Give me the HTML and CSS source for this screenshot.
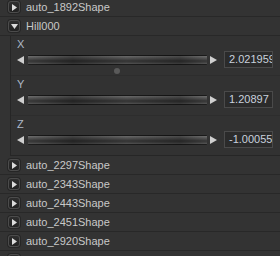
FILE: index.html
```html
<!DOCTYPE html>
<html>
<head>
<meta charset="utf-8">
<link rel="stylesheet" href="styles.css">
</head>
<body>
<div class="list">
  <div class="row"><span class="btn"><svg width="5" height="7" viewBox="0 0 5 7"><path d="M0 0 L5 3.5 L0 7 Z" fill="#dcdcdc"/></svg></span><span class="name">auto_1892Shape</span></div>
  <div class="row"><span class="btn"><svg width="7" height="5" viewBox="0 0 7 5"><path d="M0 0 L7 0 L3.5 5 Z" fill="#dcdcdc"/></svg></span><span class="name">Hill000</span></div>
  <div class="panel">
    <div class="attr">
      <div class="label">X</div>
      <div class="ctl">
        <svg class="arr" width="7" height="8" viewBox="0 0 7 8"><path d="M7 0 L0 4 L7 8 Z" fill="#cfcfcf"/></svg>
        <div class="slider"></div>
        <svg class="arr r" width="7" height="8" viewBox="0 0 7 8"><path d="M0 0 L7 4 L0 8 Z" fill="#cfcfcf"/></svg>
        <div class="field">2.021959</div>
      </div>
      <div class="dotrow"><span class="dot"></span></div>
    </div>
    <div class="attr">
      <div class="label">Y</div>
      <div class="ctl">
        <svg class="arr" width="7" height="8" viewBox="0 0 7 8"><path d="M7 0 L0 4 L7 8 Z" fill="#cfcfcf"/></svg>
        <div class="slider"></div>
        <svg class="arr r" width="7" height="8" viewBox="0 0 7 8"><path d="M0 0 L7 4 L0 8 Z" fill="#cfcfcf"/></svg>
        <div class="field">1.20897</div>
      </div>
    </div>
    <div class="attr">
      <div class="label">Z</div>
      <div class="ctl">
        <svg class="arr" width="7" height="8" viewBox="0 0 7 8"><path d="M7 0 L0 4 L7 8 Z" fill="#cfcfcf"/></svg>
        <div class="slider"></div>
        <svg class="arr r" width="7" height="8" viewBox="0 0 7 8"><path d="M0 0 L7 4 L0 8 Z" fill="#cfcfcf"/></svg>
        <div class="field">-1.00055</div>
      </div>
    </div>
  </div>
  <div class="row"><span class="btn"><svg width="5" height="7" viewBox="0 0 5 7"><path d="M0 0 L5 3.5 L0 7 Z" fill="#dcdcdc"/></svg></span><span class="name">auto_2297Shape</span></div>
  <div class="row"><span class="btn"><svg width="5" height="7" viewBox="0 0 5 7"><path d="M0 0 L5 3.5 L0 7 Z" fill="#dcdcdc"/></svg></span><span class="name">auto_2343Shape</span></div>
  <div class="row"><span class="btn"><svg width="5" height="7" viewBox="0 0 5 7"><path d="M0 0 L5 3.5 L0 7 Z" fill="#dcdcdc"/></svg></span><span class="name">auto_2443Shape</span></div>
  <div class="row"><span class="btn"><svg width="5" height="7" viewBox="0 0 5 7"><path d="M0 0 L5 3.5 L0 7 Z" fill="#dcdcdc"/></svg></span><span class="name">auto_2451Shape</span></div>
  <div class="row"><span class="btn"><svg width="5" height="7" viewBox="0 0 5 7"><path d="M0 0 L5 3.5 L0 7 Z" fill="#dcdcdc"/></svg></span><span class="name">auto_2920Shape</span></div>
  <div class="row"><span class="btn"><svg width="5" height="7" viewBox="0 0 5 7"><path d="M0 0 L5 3.5 L0 7 Z" fill="#dcdcdc"/></svg></span><span class="name">auto_3012Shape</span></div>
</div>
</body>
</html>
```
FILE: styles.css
```css
html, body {
  margin: 0;
  padding: 0;
  background: #333333;
  width: 280px;
  height: 256px;
  overflow: hidden;
}
body {
  font-family: "Liberation Sans", Arial, sans-serif;
  font-size: 11px;
  color: #c8c8c8;
}
.list {
  margin-top: -2px;
  display: flex;
  flex-direction: column;
}
.row {
  height: 18px;
  border-bottom: 1px solid #282828;
  display: flex;
  align-items: center;
  padding-left: 8px;
}
.btn {
  width: 10px;
  height: 10px;
  border: 1px solid #4c4c4c;
  border-radius: 3px;
  background: linear-gradient(#2e2e2e, #222222);
  box-shadow: 0 0 0 1px #262626;
  display: flex;
  align-items: center;
  justify-content: center;
  margin-right: 6px;
}
.name {
  line-height: 18px;
  white-space: nowrap;
}
.panel {
  margin-left: 10px;
  border-left: 1px solid #262626;
  border-bottom: 1px solid #262626;
  height: 119px;
  display: flex;
  flex-direction: column;
  background: #323232;
}
.panel .attr:last-child {
  border-bottom: none;
  height: 39px;
}
.attr {
  height: 39px;
  border-bottom: 1px solid #2d2d2d;
  padding-left: 6px;
  display: flex;
  flex-direction: column;
}
.label {
  height: 15px;
  line-height: 16px;
  color: #aeb8c8;
}
.ctl {
  height: 17px;
  display: flex;
  align-items: center;
}
.arr {
  flex: none;
}
.slider {
  width: 179px;
  height: 10px;
  margin: 0 3px 0 4px;
  border-radius: 1px;
  background:
    linear-gradient(to right, rgba(0,0,0,0.05), rgba(0,0,0,0.4) 25%, rgba(0,0,0,0.1) 55%, rgba(0,0,0,0.35) 85%, rgba(0,0,0,0.05)),
    linear-gradient(#1c1c1c 0, #1c1c1c 1px, #777 1px, #5c5c5c 3px, #383838 6px, #4c4c4c 8px, #606060 9px, #1e1e1e 9px);
}
.arr.r {
  margin-right: 7px;
  width: 7px;
}
.field {
  width: 43px;
  height: 15px;
  border: 1px solid #4a4a4a;
  background: #2b2b2b;
  color: #c9d1dd;
  padding-left: 4px;
  line-height: 15px;
  overflow: hidden;
  white-space: nowrap;
}
.dotrow {
  height: 7px;
  display: flex;
  align-items: flex-start;
}
.dot {
  width: 6px;
  height: 6px;
  border-radius: 50%;
  background: #5a5a5a;
  margin-left: 97px;
}
```
